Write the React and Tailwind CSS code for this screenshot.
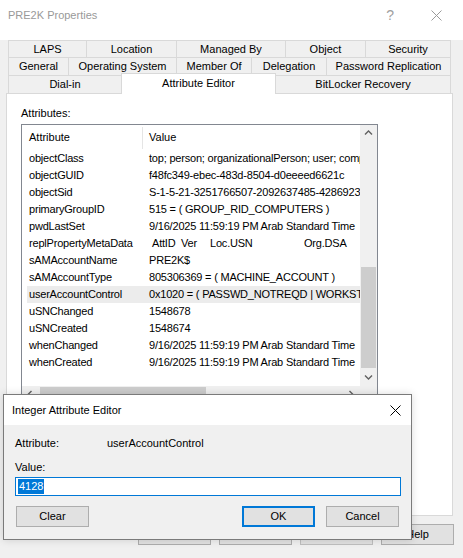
import React from 'react'

const ROWS = [
  ['objectClass', 'top; person; organizationalPerson; user; computer'],
  ['objectGUID', 'f48fc349-ebec-483d-8504-d0eeeed6621c'],
  ['objectSid', 'S-1-5-21-3251766507-2092637485-4286923049-1140'],
  ['primaryGroupID', '515 = ( GROUP_RID_COMPUTERS )'],
  ['pwdLastSet', '9/16/2025 11:59:19 PM Arab Standard Time'],
  ['replPropertyMetaData', null],
  ['sAMAccountName', 'PRE2K$'],
  ['sAMAccountType', '805306369 = ( MACHINE_ACCOUNT )'],
  ['userAccountControl', '0x1020 = ( PASSWD_NOTREQD | WORKSTATION_TRUST_ACCOUNT )'],
  ['uSNChanged', '1548678'],
  ['uSNCreated', '1548674'],
  ['whenChanged', '9/16/2025 11:59:19 PM Arab Standard Time'],
  ['whenCreated', '9/16/2025 11:59:19 PM Arab Standard Time'],
]

const TAB_ROW1 = [['LAPS', 'w-[78px]'], ['Location', 'w-[90px]'], ['Managed By', 'w-[109px]'], ['Object', 'w-[80px]'], ['Security', 'w-[86px] border-r']]
const TAB_ROW2 = [['General', 'w-[60px]'], ['Operating System', 'w-[108px]'], ['Member Of', 'w-[75px]'], ['Delegation', 'w-[75px]'], ['Password Replication', 'w-[125px] border-r']]

function Chevron({ dir }) {
  const pts = {
    up: '1,5.5 4.5,2 8,5.5',
    down: '1,2.5 4.5,6 8,2.5',
    left: '5.5,1 2,4.5 5.5,8',
    right: '2.5,1 6,4.5 2.5,8',
  }
  return (
    <svg width="9" height="9" viewBox="0 0 9 9">
      <polyline points={pts[dir]} fill="none" stroke="#606060" strokeWidth="1.4" />
    </svg>
  )
}

function CloseX({ color }) {
  return (
    <svg width="11" height="11" viewBox="0 0 11 11">
      <path d="M0.5 0.5 L10.5 10.5 M10.5 0.5 L0.5 10.5" stroke={color} strokeWidth="1" />
    </svg>
  )
}

function Btn({ children, className = '' }) {
  return (
    <div className={`w-[73px] h-[21px] flex items-center justify-center bg-[#e1e1e1] ${className}`}>
      {children}
    </div>
  )
}

export default function App() {
  return (
    <div className="relative w-[463px] h-[558px] overflow-hidden bg-white text-[11px] leading-[13px] text-black font-['Liberation_Sans',Arial,sans-serif]">
      {/* title bar */}
      <div className="h-[30px] flex items-center pl-[8px] text-[#999999]">
        <span className="flex-1">PRE2K Properties</span>
        <span className="text-[14px] font-light mr-[37px] text-[#a0a0a0]">?</span>
        <span className="mr-[21px] flex"><CloseX color="#9a9a9a" /></span>
      </div>

      <div className="h-[523px] bg-[#f0f0f0] border-b border-[#d2d2d2]">
        {/* tabs */}
        <div className="ml-[8px] mt-[10px] w-[443px]">
          <div className="flex h-[17px]">
            {TAB_ROW1.map(([t, w]) => (
              <div key={t} className={`${w} border-l border-t border-[#d9d9d9] flex items-center justify-center`}>{t}</div>
            ))}
          </div>
          <div className="flex h-[18px]">
            {TAB_ROW2.map(([t, w]) => (
              <div key={t} className={`${w} border-l border-t border-[#d9d9d9] flex items-center justify-center`}>{t}</div>
            ))}
          </div>
          <div className="flex items-end h-[18px]">
            <div className="w-[113px] h-[18px] border-l border-t border-[#d9d9d9] flex items-center justify-center">Dial-in</div>
            <div className="relative z-10 w-[155px] h-[21px] -mb-[1px] bg-white border-l border-t border-r border-[#d9d9d9] flex items-start justify-center pt-[3px]">Attribute Editor</div>
            <div className="w-[175px] h-[18px] border-t border-r border-[#d9d9d9] flex items-center justify-center">BitLocker Recovery</div>
          </div>
        </div>

        {/* panel */}
        <div className="ml-[6px] w-[447px] h-[423px] border border-[#d9d9d9] bg-white">
          <div className="ml-[14px] mt-[13px] h-[13px]">Attributes:</div>
          <div className="ml-[14px] mt-[4px] w-[357px] h-[280px] border border-[#828790] grid grid-cols-[338px_17px] grid-rows-[261px_17px]">
            <div className="overflow-hidden">
              <div className="h-[25px] flex items-center">
                <div className="w-[120px] pl-[7px]">Attribute</div>
                <div className="w-px h-[22px] bg-[#e5e5e5]" />
                <div className="pl-[6px]">Value</div>
              </div>
              {ROWS.map(([a, v]) => (
                <div key={a} className={`ml-[5px] h-[17px] flex items-center whitespace-nowrap tracking-[-0.2px] ${a === 'userAccountControl' ? 'bg-[#ececec]' : ''}`}>
                  <div className="w-[122px] pl-[2px] shrink-0">{a}</div>
                  {v !== null ? (
                    <div>{v}</div>
                  ) : (
                    <div className="flex">
                      <span className="w-[32px] pl-[3px]">AttID</span>
                      <span className="w-[29px]">Ver</span>
                      <span className="w-[94px]">Loc.USN</span>
                      <span>Org.DSA</span>
                    </div>
                  )}
                </div>
              ))}
            </div>
            {/* vertical scrollbar */}
            <div className="bg-[#f0f0f0] flex flex-col">
              <div className="h-[17px] flex items-center justify-center"><Chevron dir="up" /></div>
              <div className="flex-1 pt-[125px] flex justify-center">
                <div className="w-[15px] h-[101px] bg-[#cdcdcd]" />
              </div>
              <div className="h-[17px] flex items-center justify-center"><Chevron dir="down" /></div>
            </div>
            {/* horizontal scrollbar */}
            <div className="bg-[#f0f0f0] flex items-center">
              <div className="w-[17px] h-full flex items-center justify-center"><Chevron dir="left" /></div>
              <div className="ml-[1px] w-[166px] h-[15px] bg-[#cdcdcd]" />
              <div className="flex-1" />
              <div className="w-[17px] h-full flex items-center justify-center"><Chevron dir="right" /></div>
            </div>
            <div className="bg-[#f0f0f0]" />
          </div>
        </div>

        {/* window buttons */}
        <div className="mt-[8px] flex justify-end gap-[8px] pr-[9px]">
          <Btn className="border border-[#adadad]">OK</Btn>
          <Btn className="border border-[#adadad]">Cancel</Btn>
          <Btn className="border border-[#bfbfbf] bg-[#cccccc] text-[#838383]">Apply</Btn>
          <Btn className="border border-[#adadad]">Help</Btn>
        </div>
      </div>

      {/* Integer Attribute Editor dialog */}
      <div className="absolute left-[3px] top-[394px] w-[409px] h-[146px] border border-[#7a7a7a] bg-[#f0f0f0] shadow-[0_0_8px_rgba(0,0,0,0.15)]">
        <div className="h-[30px] bg-white flex items-center pl-[8px]">
          <span className="flex-1">Integer Attribute Editor</span>
          <span className="mr-[10px] flex"><CloseX color="#000000" /></span>
        </div>
        <div className="px-[11px]">
          <div className="mt-[12px] h-[13px] flex">
            <span className="w-[92px]">Attribute:</span>
            <span>userAccountControl</span>
          </div>
          <div className="mt-[11px] h-[13px]">Value:</div>
          <div className="mt-[3px] w-[386px] h-[19px] border border-[#0078d7] bg-white flex items-center pl-[2px]">
            <span className="bg-[#0078d7] text-white h-[15px] leading-[15px] px-[1px]">4128</span>
          </div>
          <div className="mt-[10px] flex">
            <Btn className="ml-[1px] border border-[#adadad]">Clear</Btn>
            <div className="flex-1" />
            <Btn className="border-2 border-[#0078d7]">OK</Btn>
            <Btn className="ml-[11px] mr-[1px] border border-[#adadad]">Cancel</Btn>
          </div>
        </div>
      </div>
    </div>
  )
}
